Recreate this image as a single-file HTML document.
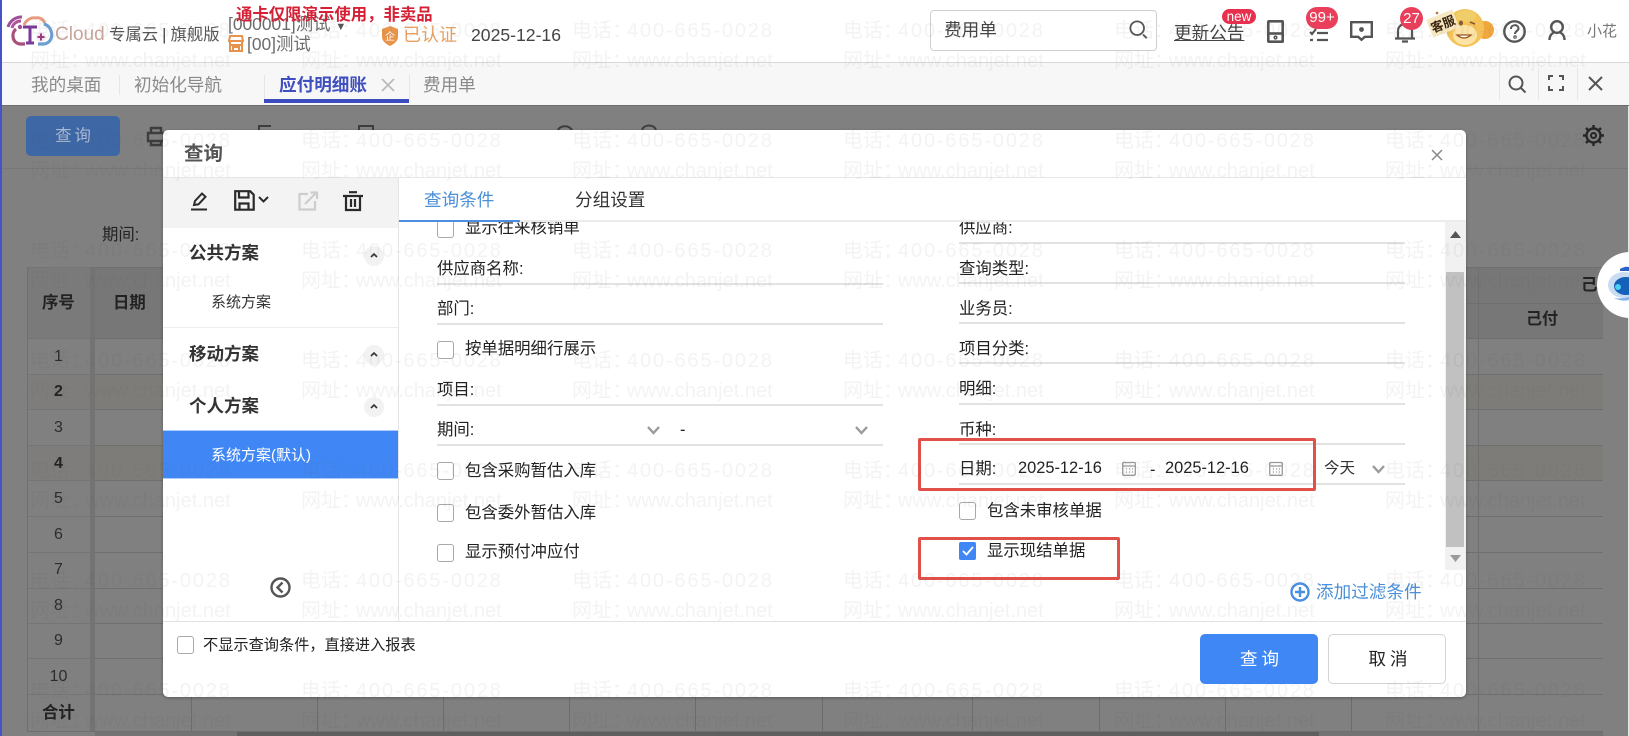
<!DOCTYPE html>
<html lang="zh-CN">
<head>
<meta charset="utf-8">
<title>应付明细账</title>
<style>
html,body{margin:0;padding:0;width:1629px;height:736px;overflow:hidden;background:#fff}
body{position:relative;font-family:"Liberation Sans","Noto Sans CJK SC",sans-serif;color:#222}
.a{position:absolute}
.t{position:absolute;white-space:nowrap;line-height:20px;height:20px}
.f{font-size:16.4px;color:#222}
.ln{position:absolute;height:2px;background:#e2e2e2}
.L{left:437px;width:446px}
.R{left:959px;width:446px}
.cb{position:absolute;width:15px;height:16px;border:1px solid #a8a8a8;border-radius:3px;background:#fff}
.row{position:absolute;left:27px;width:1576px;height:1px;background:#6f6f6f}
.even{position:absolute;left:27px;width:1576px;background:#7d7c78}
.n{position:absolute;left:27px;width:63px;text-align:center;line-height:20px;font-size:16px;color:#2c2c2c}
.vl{position:absolute;top:695px;width:1px;height:36px;background:#6c6c6c}
svg{position:absolute;overflow:visible}
</style>
</head>
<body>

<!-- header -->
<div class="a" style="left:0;top:0;width:1629px;height:62px;background:#fff"></div>
<svg style="left:0;top:0" width="110" height="60" viewBox="0 0 110 60" fill="none">
  <path d="M8 27a14 14 0 0 1 14-10" stroke="#a0509a" stroke-width="3"/>
  <path d="M12 28a9 9 0 0 1 9-7" stroke="#b0559a" stroke-width="3"/>
  <circle cx="20" cy="27" r="2.200" fill="#a0509a"/>
  <path d="M24 25c2-5 7-8 12-7 3-1 7 1 9 5" stroke="#e89a80" stroke-width="3"/>
  <path d="M16 29c-5 4-4 14 4 15h5" stroke="#a8507a" stroke-width="3.200"/>
  <path d="M38 44h6c7-1 9-8 7-13-1-4-4-6-7-7" stroke="#6c9fd0" stroke-width="3.200"/>
  <path d="M23 27h14M30 27v15M26 43h8" stroke="#7a3a98" stroke-width="3"/>
  <circle cx="41" cy="37" r="5" fill="#f5eaf2"/>
  <path d="M41 33.500v7M37.500 37h7" stroke="#a03a80" stroke-width="2"/>
</svg>
<div class="t" style="left:55px;top:25px;font-size:19px;color:#c9a59b">Cloud</div>
<div class="t" style="left:109px;top:25px;font-size:16.4px;color:#555">专属云<span style="margin:0 4px;color:#444">|</span>旗舰版</div>
<div class="t" style="left:228px;top:14px;font-size:17.4px;color:#6c6c6c">[000001]测试 <span style="font-size:11px;color:#555">&#9660;</span></div>
<div class="t" style="left:236px;top:5px;font-size:16.4px;font-weight:bold;color:#d62035">通卡仅限演示使用，非卖品</div>
<svg style="left:228px;top:35px" width="16" height="17" viewBox="0 0 16 17" fill="none" stroke="#e8934d" stroke-width="2"><path d="M2 1h12l1 5H1zM2 6v10h12V6M1 10h14M5 16v-4h6v4"/></svg>
<div class="t" style="left:247px;top:34px;font-size:17.4px;color:#6c6c6c">[00]测试</div>
<svg style="left:381px;top:26px" width="18" height="20" viewBox="0 0 18 20"><path d="M9 0l8 3v8c0 4-4 7-8 9-4-2-8-5-8-9V3z" fill="#e8954a"/><text x="9" y="14" font-size="10" fill="#fff" text-anchor="middle" font-family="Liberation Sans,Noto Sans CJK SC,sans-serif">企</text></svg>
<div class="t" style="left:403px;top:25px;font-size:18px;color:#e8a060">已认证</div>
<div class="t" style="left:471px;top:25px;font-size:17.6px;color:#444">2025-12-16</div>

<div class="a" style="left:930px;top:10px;width:225px;height:39px;border:1px solid #cfcfcf;border-radius:4px;background:#fff"></div>
<div class="t" style="left:944px;top:20px;font-size:17.6px;color:#444">费用单</div>
<svg style="left:1129px;top:20px" width="20" height="20" viewBox="0 0 21 22" fill="none" stroke="#555" stroke-width="2"><circle cx="8.500" cy="9" r="7.500"/><path d="M15 16l4 4"/></svg>
<div class="t" style="left:1174px;top:23px;font-size:17.6px;color:#444;text-decoration:underline">更新公告</div>
<div class="a" style="left:1222px;top:9px;width:34px;height:15px;border-radius:8px;background:#e8304e;color:#fff;font-size:13.5px;line-height:15px;text-align:center">new</div>
<svg style="left:1267px;top:20px" width="17" height="23" viewBox="0 0 17 23" fill="none" stroke="#555" stroke-width="2.600"><rect x="1.300" y="1.300" width="14.400" height="20.400" rx=".5"/><path d="M1 13.500h15"/><circle cx="8.500" cy="17.500" r=".8"/></svg>
<svg style="left:1309px;top:27px" width="20" height="15" viewBox="0 0 20 15" fill="none" stroke="#555" stroke-width="2.200"><path d="M1 5l2 2 4-5M8 6h11M1 13h3M8 13h11"/></svg>
<div class="a" style="left:1306px;top:7px;width:32px;height:22px;border-radius:11px;background:#ea3f5b;color:#fff;font-size:15px;line-height:22px;text-align:center">99+</div>
<svg style="left:1350px;top:21px" width="23" height="20" viewBox="0 0 23 20" fill="none" stroke="#555" stroke-width="2.400"><path d="M1.200 1.200h20.600v14.600h-7l-3.300 3-3.300-3h-7z"/><circle cx="11.500" cy="8.500" r="1.200" fill="#555"/></svg>
<svg style="left:1394px;top:22px" width="22" height="21" viewBox="0 0 22 21" fill="none" stroke="#555" stroke-width="2.200"><path d="M4 16V9c0-4 3-7 7-7s7 3 7 7v7M1 16.500h20M8 19.500h6"/></svg>
<div class="a" style="left:1400px;top:7px;width:23px;height:23px;border-radius:50%;background:#ea3f5b;color:#fff;font-size:15px;line-height:23px;text-align:center">27</div>
<!-- monkey -->
<svg style="left:1428px;top:8px" width="68" height="42" viewBox="0 0 68 42">
  <ellipse cx="57" cy="22" rx="9" ry="9" fill="#f0a83e"/>
  <ellipse cx="37" cy="20" rx="19" ry="19" fill="#f5c257"/>
  <ellipse cx="38" cy="8" rx="10" ry="6" fill="#efce6a"/>
  <ellipse cx="37" cy="27" rx="12" ry="10" fill="#fde4a6"/>
  <ellipse cx="33" cy="15" rx="2" ry="2.500" fill="#8a5a30"/><path d="M42 14l5 2" stroke="#8a5a30" stroke-width="1.600"/>
  <path d="M29 27q7 6 14 0z" stroke="#a0551c" stroke-width="1.200" fill="#fff"/>
  <g transform="rotate(-22 15 16)"><rect x="1" y="6" width="28" height="19" fill="#f6e8c0"/><text x="15" y="20.500" font-size="12.500" font-weight="bold" fill="#3a2410" text-anchor="middle" font-family="Liberation Sans,Noto Sans CJK SC,sans-serif">客服</text></g>
  <circle cx="9" cy="5" r="1.300" fill="#c0703a"/>
</svg>
<svg style="left:1503px;top:20px" width="23" height="23" viewBox="0 0 23 23" fill="none" stroke="#555" stroke-width="2.400"><circle cx="11.500" cy="11.500" r="10.200"/><path d="M8 9c0-5 7.500-5 7.500-.5 0 2.500-3.500 2.500-3.500 5.500" stroke-width="2"/><circle cx="12" cy="17" r=".6"/></svg>
<svg style="left:1548px;top:20px" width="18" height="21" viewBox="0 0 18 21" fill="none" stroke="#555" stroke-width="2.400"><circle cx="9" cy="7" r="5.800"/><path d="M1.500 20c0-5 3-7 4.500-7.500M16.500 20c0-5-3-7-4.500-7.500"/></svg>
<div class="t" style="left:1587px;top:22px;font-size:15px;color:#777">小花</div>

<!-- tabs -->
<div class="a" style="left:0;top:62px;width:1629px;height:43px;background:#f7f7f7;border-top:1px solid #d8d8d8;box-sizing:border-box"></div>
<div class="t" style="left:31px;top:75px;font-size:17.6px;color:#8a8a8a">我的桌面</div>
<div class="a" style="left:119px;top:75px;width:1px;height:20px;background:#e6e6e6"></div>
<div class="t" style="left:134px;top:75px;font-size:17.6px;color:#8a8a8a">初始化导航</div>
<div class="a" style="left:264px;top:75px;width:1px;height:24px;background:#e6e6e6"></div>
<div class="t" style="left:279px;top:75px;font-size:17.6px;font-weight:bold;color:#3e4fbf">应付明细账</div>
<svg style="left:381px;top:78px" width="14" height="14" fill="none" stroke="#bbb" stroke-width="1.800"><path d="M1 1l12 12M13 1L1 13"/></svg>
<div class="a" style="left:264px;top:99px;width:145px;height:4px;background:#3c4bbd"></div>
<div class="a" style="left:409px;top:75px;width:1px;height:24px;background:#e6e6e6"></div>
<div class="t" style="left:423px;top:75px;font-size:17.6px;color:#8a8a8a">费用单</div>
<div class="a" style="left:1499px;top:68px;width:1px;height:32px;background:#e6e6e6"></div>
<div class="a" style="left:1538px;top:68px;width:1px;height:32px;background:#e6e6e6"></div>
<div class="a" style="left:1577px;top:68px;width:1px;height:32px;background:#e6e6e6"></div>
<svg style="left:1508px;top:75px" width="19" height="18" fill="none" stroke="#555" stroke-width="2"><circle cx="8" cy="8" r="6.500"/><path d="M13 13l4.500 4.500"/></svg>
<svg style="left:1548px;top:75px" width="16" height="16" fill="none" stroke="#555" stroke-width="2"><path d="M1 5V1h4M11 1h4v4M15 11v4h-4M5 15H1v-4"/></svg>
<svg style="left:1588px;top:76px" width="15" height="15" fill="none" stroke="#555" stroke-width="2"><path d="M1 1l13 13M14 1L1 14"/></svg>

<!-- dimmed page -->
<div class="a" style="left:0;top:105px;width:1629px;height:631px;background:#808080;border-top:1px solid #6d6d6d;box-sizing:border-box"></div>
<div class="a" style="left:1628px;top:106px;width:1px;height:630px;background:#e8e8e8"></div>
<div class="a" style="left:0;top:168px;width:1628px;height:1px;background:#777"></div>
<div class="a" style="left:26px;top:116px;width:94px;height:40px;border-radius:5px;background:#3d67a5;color:#a9b8d0;font-size:16.4px;line-height:40px;text-align:center;letter-spacing:3px;text-indent:3px">查询</div>
<svg style="left:147px;top:127px" width="18" height="20" fill="none" stroke="#3d3d3d" stroke-width="2.400"><path d="M4 6V1h10v5M1 6h16v8H1zM4 14v4h10v-4"/></svg>
<svg style="left:258px;top:125px" width="14" height="6" fill="none" stroke="#3d3d3d" stroke-width="2"><path d="M1 5V1h12"/></svg>
<svg style="left:358px;top:125px" width="16" height="6" fill="none" stroke="#3d3d3d" stroke-width="2"><path d="M1 5V1h14v4"/></svg>
<svg style="left:556px;top:124px" width="18" height="7" fill="none" stroke="#3d3d3d" stroke-width="2"><path d="M2 6c2-4 10-6 14 0"/></svg>
<svg style="left:640px;top:124px" width="18" height="7" fill="none" stroke="#3d3d3d" stroke-width="2"><path d="M2 6c2-6 12-6 14 0"/></svg>
<svg style="left:1582px;top:124px" width="23" height="23" viewBox="0 0 23 23" fill="none" stroke="#262626"><circle cx="11.500" cy="11.500" r="7" stroke-width="2.400"/><circle cx="11.500" cy="11.500" r="2.500" stroke-width="2"/><path d="M11.500 1v3M11.500 19v3M1 11.500h3M19 11.500h3M4 4l2.200 2.200M17 17l2 2M19 4l-2.200 2.200M6 17l-2 2" stroke-width="2.400"/></svg>
<div class="t" style="left:102px;top:225px;font-size:16.4px;color:#222">期间:</div>

<!-- table -->
<div class="a" style="left:27px;top:267px;width:1576px;height:71px;background:#777"></div>
<div class="even" style="top:374px;height:35px"></div>
<div class="even" style="top:445px;height:35px"></div>
<div class="row" style="top:267px"></div><div class="row" style="top:303px;left:1466px;width:137px"></div>
<div class="row" style="top:338px"></div><div class="row" style="top:374px"></div><div class="row" style="top:409px"></div><div class="row" style="top:445px"></div><div class="row" style="top:480px"></div><div class="row" style="top:516px"></div><div class="row" style="top:552px"></div><div class="row" style="top:588px"></div><div class="row" style="top:623px"></div><div class="row" style="top:658px"></div><div class="row" style="top:694px"></div><div class="row" style="top:731px"></div>
<div class="a" style="left:27px;top:267px;width:63px;height:464px;background:rgba(128,128,128,.35);border-left:1px solid #6f6f6f;box-sizing:border-box"></div>
<div class="a" style="left:90px;top:267px;width:5px;height:464px;background:#737373"></div>
<div class="a" style="left:1478px;top:267px;width:1px;height:464px;background:#6f6f6f"></div>
<div class="t" style="left:42px;top:293px;font-size:16.400px;font-weight:bold;color:#222">序号</div>
<div class="t" style="left:113px;top:293px;font-size:16.400px;font-weight:bold;color:#222">日期</div>
<div class="t" style="left:1581px;top:275px;font-size:16.400px;font-weight:bold;color:#222">己</div>
<div class="t" style="left:1526px;top:310px;font-size:16px;font-weight:bold;color:#222">己付</div>
<div class="n" style="top:347px">1</div><div class="n" style="top:382px;font-weight:bold;color:#222">2</div><div class="n" style="top:418px">3</div><div class="n" style="top:454px;font-weight:bold;color:#222">4</div><div class="n" style="top:489px">5</div><div class="n" style="top:525px">6</div><div class="n" style="top:560px">7</div><div class="n" style="top:596px">8</div><div class="n" style="top:631px">9</div><div class="n" style="top:667px">10</div>
<div class="t" style="left:42px;top:703px;font-size:16.400px;font-weight:bold;color:#222">合计</div>
<div class="vl" style="left:191px"></div><div class="vl" style="left:317px"></div><div class="vl" style="left:443px"></div><div class="vl" style="left:569px"></div><div class="vl" style="left:695px"></div><div class="vl" style="left:822px"></div><div class="vl" style="left:972px"></div><div class="vl" style="left:1099px"></div><div class="vl" style="left:1225px"></div><div class="vl" style="left:1351px"></div>
<div class="a" style="left:95px;top:732px;width:1508px;height:4px;background:#737373"></div>
<div class="a" style="left:237px;top:732px;width:1082px;height:4px;background:#5f5f5f"></div>

<!-- robot -->
<div class="a" style="left:1597px;top:252px;width:66px;height:66px;border-radius:50%;background:#fff"></div>
<svg style="left:1606px;top:265px" width="23" height="40" viewBox="0 0 23 40"><path d="M14 4q5-3 9-2v4h-9z" fill="#2b62c6"/><ellipse cx="18" cy="20" rx="16" ry="13" fill="#c9dcf2"/><ellipse cx="20" cy="21" rx="12" ry="9" fill="#1560b8"/><circle cx="12" cy="22" r="3" fill="#49d0f5"/><path d="M8 33q8 4 15 2v-3q-8 2-15 1z" fill="#86b3e8"/></svg>

<!-- dialog -->
<div class="a" style="left:163px;top:130px;width:1303px;height:567px;background:#fff;border-radius:5px;box-shadow:0 1px 3px rgba(0,0,0,.3)"></div>
<div class="t" style="left:184px;top:144px;font-size:19.500px;font-weight:bold;color:#555">查询</div>
<svg style="left:1431px;top:149px" width="12" height="12" fill="none" stroke="#888" stroke-width="1.500"><path d="M1 1l10 10M11 1L1 11"/></svg>
<div class="a" style="left:163px;top:177px;width:1303px;height:1px;background:#e6e6e6"></div>

<!-- left panel -->
<div class="a" style="left:163px;top:178px;width:235px;height:50px;background:#f3f3f3"></div>
<div class="a" style="left:398px;top:178px;width:1px;height:443px;background:#e4e4e4"></div>
<svg style="left:190px;top:192px" width="18" height="19" fill="none" stroke="#2a2a2a" stroke-width="2"><path d="M4 13l1-4 7-7.500 3.500 3.300-7 7.500zM1 17.500h16"/></svg>
<svg style="left:234px;top:190px" width="21" height="21" fill="none" stroke="#2a2a2a" stroke-width="2.200"><path d="M1.200 1.200h15l3.500 3.500v15H1.200zM5 1.500v6h9.500v-6M5.500 19.500v-6h9v6"/></svg>
<svg style="left:258px;top:196px" width="11" height="7" fill="none" stroke="#2a2a2a" stroke-width="2"><path d="M1 1l4.500 4.500L10 1"/></svg>
<svg style="left:298px;top:191px" width="20" height="20" fill="none" stroke="#cdcdcd" stroke-width="2.200"><path d="M10 3H1.500v15.500H17V10M7 13L18.500 1.500M12.500 1.500h6.500V8"/></svg>
<svg style="left:343px;top:191px" width="20" height="20" fill="none" stroke="#2a2a2a" stroke-width="2.200"><path d="M0 5h20M6 1.200h8M3 5v14h14V5M8 8v8M12 8v8"/></svg>
<div class="t" style="left:189px;top:243px;font-size:17.500px;font-weight:bold;color:#333">公共方案</div>
<div class="t" style="left:211px;top:293px;font-size:15px;color:#333">系统方案</div>
<div class="a" style="left:163px;top:327px;width:235px;height:1px;background:#eee"></div>
<div class="t" style="left:189px;top:344px;font-size:17.500px;font-weight:bold;color:#333">移动方案</div>
<div class="t" style="left:189px;top:396px;font-size:17.500px;font-weight:bold;color:#333">个人方案</div>
<svg style="left:364px;top:246px" width="20" height="20"><circle cx="10" cy="10" r="10" fill="#f2f2f2"/><path d="M7 11l3-3 3 3" fill="none" stroke="#333" stroke-width="1.600"/></svg>
<svg style="left:364px;top:345px" width="20" height="20"><circle cx="10" cy="10" r="10" fill="#f2f2f2"/><path d="M7 11l3-3 3 3" fill="none" stroke="#333" stroke-width="1.600"/></svg>
<svg style="left:364px;top:397px" width="20" height="20"><circle cx="10" cy="10" r="10" fill="#f2f2f2"/><path d="M7 11l3-3 3 3" fill="none" stroke="#333" stroke-width="1.600"/></svg>
<div class="a" style="left:163px;top:430px;width:235px;height:49px;background:#4087f5;border-top:1px solid #a9ccfb;border-bottom:1px solid #a9ccfb;box-sizing:border-box"></div>
<div class="t" style="left:211px;top:446px;font-size:15px;color:#fff">系统方案(默认)</div>
<svg style="left:270px;top:577px" width="21" height="21" fill="none" stroke="#555" stroke-width="2.400"><circle cx="10.500" cy="10.500" r="9"/><path d="M12.500 5.500l-5 5 5 5"/></svg>

<!-- form left -->
<div class="cb" style="left:437px;top:220px"></div>
<div class="t f" style="left:465px;top:218px">显示往来核销单</div>
<div class="t f" style="left:437px;top:259px">供应商名称:</div><div class="ln L" style="top:283px"></div>
<div class="t f" style="left:437px;top:299px">部门:</div><div class="ln L" style="top:323px"></div>
<div class="cb" style="left:437px;top:341px"></div>
<div class="t f" style="left:465px;top:339px">按单据明细行展示</div>
<div class="t f" style="left:437px;top:380px">项目:</div><div class="ln L" style="top:404px"></div>
<div class="t f" style="left:437px;top:420px">期间:</div><div class="ln L" style="top:444px"></div>
<svg style="left:647px;top:426px" width="13" height="9" fill="none" stroke="#9a9a9a" stroke-width="2.400"><path d="M1 1l5.500 6L12 1"/></svg>
<div class="t f" style="left:680px;top:420px">-</div>
<svg style="left:855px;top:426px" width="13" height="9" fill="none" stroke="#9a9a9a" stroke-width="2.400"><path d="M1 1l5.500 6L12 1"/></svg>
<div class="cb" style="left:437px;top:462px"></div>
<div class="t f" style="left:465px;top:461px">包含采购暂估入库</div>
<div class="cb" style="left:437px;top:504px"></div>
<div class="t f" style="left:465px;top:503px">包含委外暂估入库</div>
<div class="cb" style="left:437px;top:544px"></div>
<div class="t f" style="left:465px;top:542px">显示预付冲应付</div>

<!-- form right -->
<div class="t f" style="left:959px;top:218px">供应商:</div><div class="ln R" style="top:242px"></div>
<div class="t f" style="left:959px;top:259px">查询类型:</div><div class="ln R" style="top:282px"></div>
<div class="t f" style="left:959px;top:299px">业务员:</div><div class="ln R" style="top:322px"></div>
<div class="t f" style="left:959px;top:339px">项目分类:</div><div class="ln R" style="top:362px"></div>
<div class="t f" style="left:959px;top:379px">明细:</div><div class="ln R" style="top:403px"></div>
<div class="t f" style="left:959px;top:420px">币种:</div><div class="ln R" style="top:443px"></div>
<div class="t f" style="left:959px;top:459px">日期:</div><div class="ln R" style="top:483px"></div>
<div class="t f" style="left:1018px;top:458px">2025-12-16</div>
<svg style="left:1122px;top:461px" width="14" height="15" fill="none" stroke="#999" stroke-width="1.300"><rect x=".7" y="1.500" width="12.600" height="12.800" rx="1"/><path d="M1 5h12M4 8h1M7 8h1M10 8h1M4 11h1M7 11h1M10 11h1"/></svg>
<div class="t f" style="left:1150px;top:460px">-</div>
<div class="t f" style="left:1165px;top:458px">2025-12-16</div>
<svg style="left:1269px;top:461px" width="14" height="15" fill="none" stroke="#999" stroke-width="1.300"><rect x=".7" y="1.500" width="12.600" height="12.800" rx="1"/><path d="M1 5h12M4 8h1M7 8h1M10 8h1M4 11h1M7 11h1M10 11h1"/></svg>
<div class="t" style="left:1324px;top:459px;font-size:15.500px;color:#333">今天</div>
<svg style="left:1372px;top:465px" width="13" height="9" fill="none" stroke="#9a9a9a" stroke-width="2.400"><path d="M1 1l5.500 6L12 1"/></svg>
<div class="cb" style="left:959px;top:502px"></div>
<div class="t f" style="left:987px;top:501px">包含未审核单据</div>
<div class="a" style="left:959px;top:542px;width:17px;height:18px;background:#4087f5;border-radius:2px"></div>
<svg style="left:962px;top:546px" width="12" height="10" fill="none" stroke="#fff" stroke-width="1.800"><path d="M1 5l3.500 3.500L11 1"/></svg>
<div class="t f" style="left:987px;top:541px">显示现结单据</div>

<!-- white cover to clip scroll content -->
<div class="a" style="left:399px;top:178px;width:1067px;height:42px;background:#fff"></div>
<div class="a" style="left:399px;top:220px;width:1067px;height:2px;background:#ececec"></div>
<div class="t" style="left:424px;top:190px;font-size:17.600px;color:#4a8fd8">查询条件</div>
<div class="t" style="left:575px;top:190px;font-size:17.600px;color:#333">分组设置</div>
<div class="a" style="left:399px;top:220px;width:121px;height:2px;background:#4a8fe0"></div>

<!-- scrollbar -->
<div class="a" style="left:1445px;top:222px;width:21px;height:348px;background:#f1f1f1"></div>
<div class="a" style="left:1446px;top:272px;width:18px;height:275px;background:#c1c1c1"></div>
<svg style="left:1450px;top:231px" width="11" height="7"><path d="M0 7L5.500 0 11 7z" fill="#555"/></svg>
<svg style="left:1450px;top:555px" width="11" height="7"><path d="M0 0L5.500 7 11 0z" fill="#9a9a9a"/></svg>

<!-- add filter -->
<svg style="left:1290px;top:582px" width="20" height="20" fill="none" stroke="#4a8fe0" stroke-width="2.400"><circle cx="10" cy="10" r="8.500"/><path d="M10 5v10M5 10h10"/></svg>
<div class="t" style="left:1316px;top:582px;font-size:17.600px;color:#4a8fd8">添加过滤条件</div>

<!-- footer -->
<div class="a" style="left:163px;top:621px;width:1303px;height:1px;background:#e2e2e2"></div>
<div class="cb" style="left:177px;top:636px"></div>
<div class="t" style="left:203px;top:636px;font-size:15.200px;color:#222">不显示查询条件，直接进入报表</div>
<div class="a" style="left:1200px;top:634px;width:118px;height:50px;border-radius:5px;background:#3f87f5;color:#fff;font-size:17.500px;line-height:50px;text-align:center;letter-spacing:4px;text-indent:5px">查询</div>
<div class="a" style="left:1328px;top:634px;width:116px;height:48px;border-radius:5px;background:#fff;border:1px solid #d4d4d4;color:#222;font-size:17.500px;line-height:48px;text-align:center;letter-spacing:4px;text-indent:6px">取消</div>

<!-- red annotations -->
<div class="a" style="left:918px;top:438px;width:392px;height:47px;border:3px solid #e2504a;border-radius:2px"></div>
<div class="a" style="left:918px;top:537px;width:196px;height:37px;border:3px solid #e2504a;border-radius:2px"></div>

<!-- left edge -->
<div class="a" style="left:0;top:0;width:1.500px;height:736px;background:#4653c8"></div>

<!-- watermark -->
<svg style="left:0;top:0;pointer-events:none" width="1629" height="736">
  <defs>
    <pattern id="wm" patternUnits="userSpaceOnUse" x="30" y="0" width="271" height="110">
      <g font-family="Liberation Sans,Noto Sans CJK SC,sans-serif" font-size="20" fill="#505050" fill-opacity=".065">
        <text x="0" y="37">电话：</text>
        <text x="55" y="37" letter-spacing="1.850">400-665-0028</text>
        <text x="0" y="67">网址：</text>
        <text x="55" y="67">www.chanjet.net</text>
      </g>
    </pattern>
  </defs>
  <rect width="1629" height="736" fill="url(#wm)"/>
</svg>
</body>
</html>
